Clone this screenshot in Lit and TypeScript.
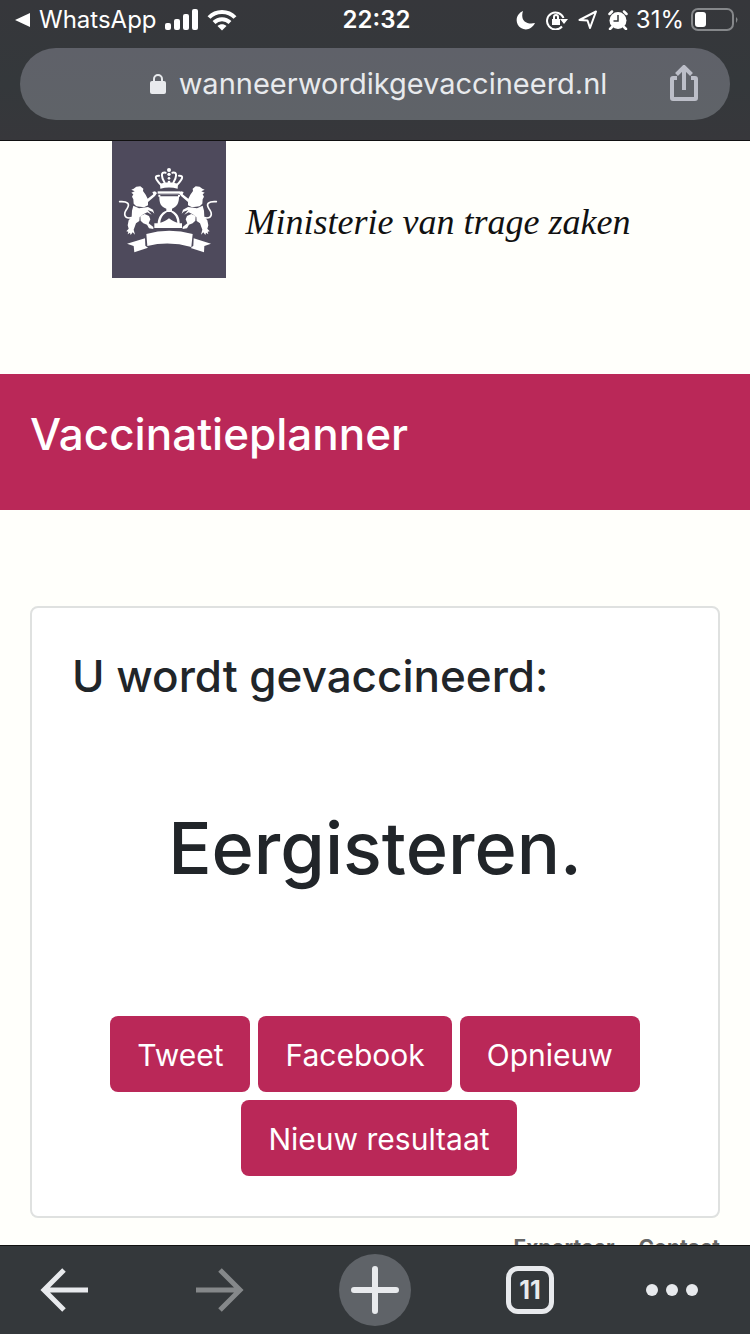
import { LitElement, html, css, svg } from "lit";
import { customElement } from "lit/decorators.js";

const lion = svg`
  <path d="M104 158 L112 152 L124 151 L133 158 L132 165 L140 176 L146 188 L163 175 L160 168 L168 166 L174 171 L168 180 L147 198 L147 208 L135 214 L112 211 L104 203 L103 190 L99 182 L103 175 L97 170 L107 166 L97 161 Z"/>
  <path d="M103 209 L120 217 L147 213 L162 221 L166 233 L160 227 L146 222 L158 236 L145 229 L133 235 L122 243 L121 255 L111 262 L104 281 L108 296 L101 289 L95 297 L93 290 L86 295 L88 287 L82 286 L89 278 L86 268 L89 253 L98 243 L99 224 Z"/>
  <path d="M124 240 L137 234 L150 240 L154 250 L149 262 L163 273 L163 279 L150 277 L144 266 L133 262 L125 254 Z"/>
  <path d="M98 245 C74 250 73 232 84 218 C94 204 86 195 62 197" fill="none" stroke="#fff" stroke-width="5" stroke-linecap="round"/>`;

@customElement("ministry-logo")
export class MinistryLogo extends LitElement {
  static styles = css`
    :host { display: block; }
    .emblem { display: block; width: 114px; height: 137px; background: #4e4a5c; }
  `;
  render() {
    return html`<svg class="emblem" viewBox="39 15 342 411" fill="#fff" role="img" aria-label="Wapen">
      <circle cx="210" cy="102" r="6"/><circle cx="210" cy="115" r="5"/><circle cx="210" cy="127" r="4"/><circle cx="210" cy="138" r="4"/>
      <g fill="none" stroke="#fff" stroke-width="6" stroke-linecap="round">
        <path d="M200 110 C184 106 187 124 197 140"/><path d="M220 110 C236 106 233 124 223 140"/>
        <path d="M180 119 C164 118 170 130 185 146"/><path d="M240 119 C256 118 250 130 235 146"/>
      </g>
      <path d="M183 143 Q210 134 237 143 L236 158 Q210 151 184 158 Z"/>
      <rect x="176" y="166" width="68" height="7"/>
      <path d="M178 176 H243 V182 H240 C240 200 235 211 219 218 V224 C235 230 242 243 242 262 H249 V276 H166 V262 H176 C177 244 186 229 202 224 V218 C184 211 181 200 181 182 H178 Z"/>
      <path fill="#4e4a5c" d="M184 177 H237 V181 H184 Z M204 228 H216 C228 235 234 245 235 260 C227 258 218 254 210 247 C202 254 193 258 184 260 C185 245 193 235 204 228 Z"/>
      <g>${lion}</g>
      <g transform="matrix(-1 0 0 1 414 0)">${lion}</g>
      <path d="M142 294 Q210 275 281 294 L277 333 Q210 314 145 330 Z"/>
      <path d="M138 307 L84 323 L104 330 L106 349 L147 335 L139 329 Z"/>
      <path d="M284 307 L336 323 L316 330 L315 349 L275 336 L283 329 Z"/>
    </svg>`;
  }
}

@customElement("status-bar")
export class StatusBar extends LitElement {
  static styles = css`
    :host { display: grid; grid-template-columns: 1fr auto 1fr; align-items: center; height: 40px; padding: 0 12px 0 15px; color: #fff; font: 400 23px/28px Inter, "Liberation Sans", sans-serif; }
    .side { display: flex; align-items: center; gap: 8px; }
    .right { justify-content: flex-end; }
    .side, .time { font-size: 24px; }
    .time { font-weight: 600; }
    .icons { display: flex; gap: 10px; }
    .battery { display: block; margin-left: -2px; }
  `;
  render() {
    return html`
      <div class="side">
        <svg width="16" height="16" fill="#fff"><path d="M0 8 15 1V15Z"/></svg>
        <span>WhatsApp</span>
        <svg width="34" height="22" fill="#fff"><rect y="14" width="6" height="7" rx="2"/><rect x="9" y="10" width="6" height="11" rx="2"/><rect x="18" y="5" width="6" height="16" rx="2"/><rect x="27" width="6" height="21" rx="2"/></svg>
        <svg width="30" height="22" viewBox="0 0 30 22" fill="none" stroke="#fff" stroke-width="4"><path d="M2 8.500C9 1 21 1 28 8.500M7 13.500c4.500-4.500 11.500-4.500 16 0"/><path fill="#fff" stroke="none" d="M10.500 17c2.500-2.300 6.500-2.300 9 0L15 21.500Z"/></svg>
      </div>
      <span class="time">22:32</span>
      <div class="side right">
        <div class="icons">
          <svg width="20" height="20" fill="#fff"><path d="M7 1C4 10 10 15 19 13 16 19 10 21 5 18-2 13 0 4 7 1Z"/></svg>
          <svg width="22" height="20" fill="none" stroke="#fff" stroke-width="2"><path d="M16 16.500A8.500 8.500 0 1 1 17.500 8"/><path fill="#fff" stroke="none" d="M14 9H22l-4 5ZM6 9h8v6H6Z"/><path d="M8 9V7a2 2 0 0 1 4 0v2"/></svg>
          <svg width="20" height="20" fill="none" stroke="#fff" stroke-width="2" stroke-linejoin="round"><path d="M1.500 10 18 1.500 12 18 9.500 10.500Z"/></svg>
          <svg width="20" height="20" fill="#fff"><circle cx="10" cy="10.500" r="8.500"/><path d="M1.500 4 4 1.500M18.500 4 16 1.500M4 17l-2 2M16 17l2 2" stroke="#fff" stroke-width="2.500" stroke-linecap="round"/><path d="M10 5v6H5.500" fill="none" stroke="#35373b" stroke-width="1.500"/></svg>
        </div>
        <span>31%</span>
        <svg class="battery" width="48" height="24"><rect x="2" y="1" width="41" height="21" rx="6" fill="none" stroke="#85878a" stroke-width="2"/><rect x="5" y="4" width="11" height="15" rx="3" fill="#fff"/><path d="M46 9q3 2 0 6Z" fill="#85878a"/></svg>
      </div>`;
  }
}

@customElement("app-root")
export class AppRoot extends LitElement {
  static styles = css`
    :host { display: flex; flex-direction: column; height: 100vh; overflow: hidden; background: #fffffb; color: #212529; font-family: Inter, "Liberation Sans", sans-serif; }
    button { border: 0; margin: 0; padding: 0; background: none; color: inherit; font: inherit; cursor: pointer; }
    svg { display: block; }
    .chrome { flex: none; background: linear-gradient(#36373b, #34383b 60%, #37373b); border-bottom: 1px solid #111; }
    .address { display: grid; grid-template-columns: 1fr auto 1fr; align-items: center; height: 72px; margin: 8px 20px 20px; padding: 0 30px 0 36px; border-radius: 36px; background: linear-gradient(#5f6169, #5f6368); color: #e8eaed; }
    .site { grid-column: 2; display: flex; align-items: center; gap: 12px; font-size: 29px; line-height: 36px; }
    .share { justify-self: end; }
    .page { flex: 1; min-height: 0; overflow: hidden; }
    .ministry { display: flex; justify-content: center; gap: 20px; padding-right: 8px; margin-bottom: 96px; }
    .name { margin-top: 60px; font: italic 36px/42px "Liberation Serif", serif; color: #111; }
    .banner { background: #ba2858; color: #fff; padding: 32px 30px 48px; }
    h1, h2 { margin: 0; font-size: 44px; line-height: 56px; font-weight: 500; }
    .card { margin: 96px 30px 0; padding: 40px; border: 2px solid #dfe1e0; border-radius: 8px; background: #fff; }
    .result { margin: 96px 0 120px; text-align: center; font-size: 72px; line-height: 96px; font-weight: 500; }
    .actions { display: flex; flex-wrap: wrap; justify-content: center; row-gap: 8px; }
    .actions button { padding: 15px 27px 13px; border-radius: 8px; background: #ba2858; color: #fff; font-size: 30px; line-height: 48px; }
    .actions button + button { margin-left: 8px; }
    .links { display: flex; justify-content: flex-end; gap: 24px; padding: 16px 30px; font-size: 21px; line-height: 28px; font-weight: 700; }
    .links a { color: #666; text-decoration: none; }
    .toolbar { flex: none; display: grid; grid-template-columns: 102fr 156fr 154fr 156fr 90fr; justify-items: center; align-items: center; height: 88px; border-top: 1px solid #111; padding: 0 52px 0 40px; background: #34383b; color: #e8eaed; }
    .toolbar button:first-child { justify-self: start; }
    .toolbar button:last-child { justify-self: end; }
    .new { display: grid; place-items: center; width: 72px; height: 72px; border-radius: 50%; background: #5f6368; }
    .tabs { box-sizing: border-box; width: 48px; height: 48px; border: 5px solid #e8eaed; border-radius: 12px; font-size: 25px; line-height: 38px; font-weight: 700; }
  `;
  render() {
    return html`
      <header class="chrome">
        <status-bar></status-bar>
        <div class="address">
          <div class="site">
            <svg width="18" height="22" fill="#e8eaed"><rect x="1" y="8" width="16" height="13" rx="2"/><path d="M5 9V6a4 4 0 0 1 8 0v3" fill="none" stroke="#e8eaed" stroke-width="2"/></svg>
            <span>wanneerwordikgevaccineerd.nl</span>
          </div>
          <button class="share" aria-label="Delen"><svg width="32" height="38" fill="none" stroke="#bcbec8" stroke-width="4"><path d="M9 13H5a1 1 0 0 0-1 1v19a1 1 0 0 0 1 1h22a1 1 0 0 0 1-1V14a1 1 0 0 0-1-1h-4M16 25V3M8.500 9.500 16 2l7.500 7.500"/></svg></button>
        </div>
      </header>
      <main class="page">
        <div class="ministry"><ministry-logo></ministry-logo><span class="name">Ministerie van trage zaken</span></div>
        <div class="banner"><h1>Vaccinatieplanner</h1></div>
        <section class="card">
          <h2>U wordt gevaccineerd:</h2>
          <div class="result">Eergisteren.</div>
          <div class="actions">
            <button>Tweet</button><button>Facebook</button><button>Opnieuw</button><button>Nieuw resultaat</button>
          </div>
        </section>
        <footer class="links"><a href="#exporteer">Exporteer</a><a href="#contact">Contact</a></footer>
      </main>
      <nav class="toolbar">
        <button aria-label="Vorige"><svg width="48" height="46" fill="none" stroke="#e8eaed" stroke-width="5"><path d="M48 23H4M24 3 4 23l20 20"/></svg></button>
        <button aria-label="Volgende"><svg width="48" height="46" fill="none" stroke="#85888a" stroke-width="5"><path d="M0 23h44M24 3l20 20-20 20"/></svg></button>
        <button class="new" aria-label="Nieuw tabblad"><svg width="48" height="48" stroke="#e8eaed" stroke-width="6" stroke-linecap="round"><path d="M24 3v42M3 24h42"/></svg></button>
        <button class="tabs">11</button>
        <button aria-label="Meer"><svg width="52" height="12" fill="#e8eaed"><circle cx="6" cy="6" r="6"/><circle cx="26" cy="6" r="6"/><circle cx="46" cy="6" r="6"/></svg></button>
      </nav>`;
  }
}
